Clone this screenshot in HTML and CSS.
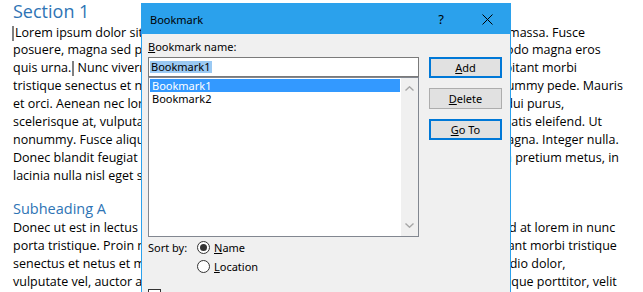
FILE: index.html
```html
<!DOCTYPE html>
<html lang="en">
<head>
    <meta charset="UTF-8">
    <title>Bookmark</title>
    <link rel="stylesheet" href="styles.css">
</head>
<body>
<div class="doc">
    <h1 class="h1">Section 1</h1>
    <div class="para">
        <div class="ln"><span class="bm bm-open"></span>Lorem ipsum dolor sit amet, consectetuer adipiscing elit. Maecenas porttitor congue massa. Fusce</div>
        <div class="ln">posuere, magna sed pulvinar ultricies, purus lectus malesuada libero, sit amet commodo magna eros</div>
        <div class="ln">quis urna.<span class="bm bm-close"></span> Nunc viverra imperdiet enim. Fusce est. Vivamus a tellus. Pellentesque habitant morbi</div>
        <div class="ln">tristique senectus et netus et malesuada fames ac turpis egestas. Proin pharetra nonummy pede. Mauris</div>
        <div class="ln">et orci. Aenean nec lorem. In porttitor. Donec laoreet nonummy augue. Suspendisse dui purus,</div>
        <div class="ln">scelerisque at, vulputate vitae, pretium mattis, nunc. Mauris eget neque at sem venenatis eleifend. Ut</div>
        <div class="ln">nonummy. Fusce aliquet pede non pede. Suspendisse dapibus lorem pellentesque magna. Integer nulla.</div>
        <div class="ln">Donec blandit feugiat ligula. Donec hendrerit, felis et imperdiet euismod, purus ipsum pretium metus, in</div>
        <div class="ln">lacinia nulla nisl eget sapien.</div>
    </div>
    <h2 class="h2">Subheading A</h2>
    <div class="para">
        <div class="ln">Donec ut est in lectus consequat consequat. Etiam eget dui. Aliquam erat volutpat. Sed at lorem in nunc</div>
        <div class="ln">porta tristique. Proin nec augue. Quisque aliquam tempor magna. Pellentesque habitant morbi tristique</div>
        <div class="ln">senectus et netus et malesuada fames ac turpis egestas. Nunc ac magna. Maecenas odio dolor,</div>
        <div class="ln">vulputate vel, auctor ac, accumsan id, felis. Pellentesque cursus sagittis felis. Pellentesque porttitor, velit</div>
    </div>
</div>

<div class="dialog">
    <div class="titlebar">
        <span class="title">Bookmark</span>
        <span class="tb-btn help">?</span>
        <span class="tb-btn">
            <svg width="11" height="11" viewBox="0 0 11 11"><path d="M0.5 0.5L10.5 10.5M10.5 0.5L0.5 10.5" stroke="#000" stroke-width="1" fill="none"/></svg>
        </span>
    </div>
    <div class="dlg-body">
        <div class="main">
            <div class="left">
                <div class="lbl"><u>B</u>ookmark name:</div>
                <div class="input"><span class="sel">Bookmark1</span></div>
                <div class="listbox">
                    <div class="items">
                        <div class="item active">Bookmark1</div>
                        <div class="item">Bookmark2</div>
                    </div>
                    <div class="scroll">
                        <svg width="9" height="5" viewBox="0 0 9 5"><path d="M0.5 4.5L4.5 0.8L8.5 4.5" stroke="#a6a6a6" stroke-width="1.4" fill="none"/></svg>
                        <svg width="9" height="5" viewBox="0 0 9 5"><path d="M0.5 0.5L4.5 4.2L8.5 0.5" stroke="#a6a6a6" stroke-width="1.4" fill="none"/></svg>
                    </div>
                </div>
            </div>
            <div class="buttons">
                <div class="btn focus"><u>A</u>dd</div>
                <div class="btn"><u>D</u>elete</div>
                <div class="btn focus"><u>G</u>o To</div>
            </div>
        </div>
        <div class="sort">
            <div class="sort-lbl">Sort by:</div>
            <div class="radios">
                <div class="radio"><span class="dot on"></span><span><u>N</u>ame</span></div>
                <div class="radio"><span class="dot"></span><span><u>L</u>ocation</span></div>
            </div>
        </div>
        <div class="check"><span class="box"></span><span><u>H</u>idden bookmarks</span></div>
    </div>
</div>
</body>
</html>
```

FILE: styles.css
```css
html, body{
    margin: 0;
    overflow: hidden;
}
body{
    background: #fff;
    color: #000;
    font-family: "Open Sans", "Noto Sans", sans-serif;
}
.doc{
    padding-left: 13px;
}
.h1{
    margin: 0;
    font-size: 18px;
    font-weight: 400;
    line-height: 23.5px;
    color: #2e74b5;
}
.h2{
    margin: 14.4px 0 0;
    font-size: 14.5px;
    font-weight: 400;
    line-height: 20px;
    color: #2e74b5;
}
.para{
    font-size: 12.5px;
    line-height: 17.9px;
    white-space: nowrap;
}
.bm{
    display: inline-block;
    width: 2px;
    height: 15px;
    vertical-align: -4px;
    border: 1px solid #808080;
    box-sizing: border-box;
}
.bm-open{
    border-right: none;
    border-left-width: 2px;
    margin-left: -1px;
    margin-right: 1px;
}
.bm-close{
    border-left: none;
    border-right-width: 2px;
    margin-left: 1px;
}

/* dialog */
.dialog{
    position: absolute;
    left: 141px;
    top: 3px;
    width: 370px;
    height: 300px;
    box-sizing: border-box;
    border: 1px solid #2ba1ec;
    background: #f0f0f0;
    font-family: "Noto Sans", sans-serif;
    font-size: 11px;
}
.titlebar{
    height: 30px;
    background: #2ba1ec;
    display: flex;
    align-items: center;
    padding-left: 8px;
}
.title{
    flex: 1;
}
.tb-btn{
    width: 46px;
    height: 30px;
    display: flex;
    align-items: center;
    justify-content: center;
}
.help{
    font-size: 13px;
}
.dlg-body{
    padding: 5px 8px 0 6px;
}
.main{
    display: flex;
    gap: 10px;
}
.left{
    width: 271px;
}
.lbl{
    line-height: 16px;
    margin-bottom: 2px;
}
.input{
    height: 20px;
    box-sizing: border-box;
    border: 1px solid #7a7a7a;
    background: #fff;
    padding: 0 1px;
    display: flex;
    align-items: center;
}
.sel{
    background: #9ac9f3;
    line-height: 12px;
    padding: 0 1px;
}
.listbox{
    height: 160px;
    box-sizing: border-box;
    border: 1px solid #828790;
    background: #fff;
    display: flex;
}
.items{
    flex: 1;
    padding: 1px;
}
.item{
    line-height: 13px;
    padding-left: 2px;
}
.item.active{
    background: #3399ff;
    color: #fff;
}
.scroll{
    width: 17px;
    background: #f0f0f0;
    display: flex;
    flex-direction: column;
    justify-content: space-between;
    align-items: center;
    padding: 8px 0;
    box-sizing: border-box;
}
.buttons{
    width: 73px;
    padding-top: 18px;
    display: flex;
    flex-direction: column;
    gap: 10px;
}
.btn{
    height: 21px;
    box-sizing: border-box;
    border: 1px solid #adadad;
    background: #e1e1e1;
    text-align: center;
    line-height: 19px;
}
.btn.focus{
    border: 2px solid #0078d7;
    line-height: 17px;
}
.sort{
    margin-top: 1px;
    display: flex;
}
.sort-lbl{
    width: 49px;
    line-height: 19px;
}
.radios{
    display: flex;
    flex-direction: column;
}
.radio{
    display: flex;
    align-items: center;
    gap: 4px;
    height: 19px;
}
.dot{
    width: 13px;
    height: 13px;
    box-sizing: border-box;
    border: 1px solid #333;
    border-radius: 50%;
    background: #fff;
    display: flex;
    align-items: center;
    justify-content: center;
}
.dot.on::after{
    content: "";
    width: 7px;
    height: 7px;
    border-radius: 50%;
    background: #333;
}
.check{
    margin-top: 13px;
    display: flex;
    gap: 5px;
    line-height: 13px;
}
.box{
    width: 13px;
    height: 13px;
    box-sizing: border-box;
    border: 1px solid #333;
    background: #fff;
}
```
